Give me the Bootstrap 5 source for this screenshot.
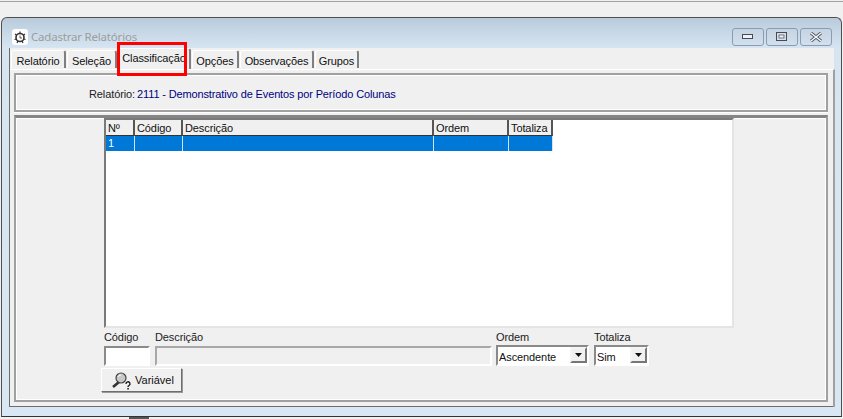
<!DOCTYPE html>
<html lang="pt"><head><meta charset="utf-8"><title>Cadastrar Relatórios</title>
<link href="https://cdn.jsdelivr.net/npm/bootstrap@5.3.0/dist/css/bootstrap.min.css" rel="stylesheet">
<style>
html,body{height:419px;overflow:hidden}
body{background:#f0f0f0;font:11px/14px "Liberation Sans",sans-serif;letter-spacing:-.1px;color:#111;position:relative;width:843px}
.deskline{height:2px;border-bottom:1px solid #a2a2a2;margin-bottom:15px;margin-top:0}
.win{width:841px;height:400px;margin-left:1px;border:1px solid #4f4f4f;border-bottom-color:#333;border-radius:6px 6px 0 0;background:linear-gradient(#b9cbdb 0,#d7e5f2 30px,#d9e7f4 100%);padding:0 7px 8px 7px}
.titlebar{height:30px;padding:8px 2px 0 1px}
.appicon{width:16px;height:16px;background:#fff;border-radius:3px;margin:0 3px 0 2px}
.wintitle{color:#9c9c9c;font-size:11.5px;font-family:"Noto Sans",sans-serif;letter-spacing:-.2px}
.capbtns{gap:2px;margin-right:0}
.capbtn{width:32px;height:18px;border:1px solid #8a9cb4;border-radius:3px;background:linear-gradient(#c6d4e2,#d2e0ee);display:flex;align-items:center;justify-content:center;padding:0}
.client{background:#f0f0f0;height:359px;border-bottom:1px solid #6d6d6d;border-left:1px solid #6d6d6d;width:825px}
.tabstrip{height:21px;padding:2px 0 0 1px;flex-wrap:nowrap;position:relative}
.tabstrip .nav-link{padding:3px 0 0;height:18px;text-align:center;color:#111;background:#f0f0f0;border:0;border-top:1px solid #fff;border-left:1px solid #fff;border-right:2px solid #808080;border-radius:3px 3px 0 0;margin-right:1px;line-height:14px;font-size:11px}
.tabstrip .nav-link.active{height:21px;margin-top:-2px;padding-top:2px;position:relative;z-index:1;color:#111;background:#f0f0f0}
.tabpage{height:338px;border-top:1px solid #fff;border-right:2px solid #a0a0a0;margin-right:-1px;padding:3px 4px 0 4px}
.relpanel{height:39px;width:814px;margin-bottom:3px;padding-left:73px;padding-top:12px;border:2px solid #a0a0a0;box-shadow:inset 1px 1px 0 #fff,inset -1px -1px 0 #fff,0 1px 0 #fff}
.rellabel{color:#222}
.relvalue{color:#000080;margin-left:2px;letter-spacing:-.14px}
.mainpanel{height:287px;width:814px;border:2px solid #a0a0a0;border-top:3px solid #858585;box-shadow:inset 1px 1px 0 #fff,inset -1px -1px 0 #fff;padding:0 0 0 88px}
.gridbox{width:630px;height:210px;background:#fff;border:2px solid;border-color:#7a7a7a #e4e4e4 #e4e4e4 #7a7a7a;overflow:hidden}
.gridbox .table{width:447px;margin:0;table-layout:fixed;--bs-table-bg:transparent;border-collapse:separate;border-spacing:0;font-size:11px}
.gridbox .table th{font-weight:400;height:15px;padding:2px 0 0 2px;line-height:13px;background:#f0f0f0;border:0;border-right:2px solid #555;border-bottom:1px solid #333;color:#111}
.gridbox .table td{height:15px;padding:1px 0 0 2px;line-height:13px;background:#0078d7;color:#fff;border:0;border-right:1px solid #cfe4f7}
.fields{margin-left:0;margin-top:1px;width:552px;height:37px}
.fieldcol{display:flex;flex-direction:column}
.fieldlbl{height:17px;padding-top:1px;color:#222}
.boxin{height:21px;border:2px solid;border-color:#8a8a8a #fff #fff #8a8a8a;background:#fff;border-radius:0;padding:0 0 0 1px;font-size:11px;line-height:20px;box-shadow:none;color:#111}
.form-control.boxoff,.form-control.boxoff:disabled{background:#f0f0f0;border-color:#a8a8a8 #fff #fff #a8a8a8}
.dropbtn{width:17px;height:16px;background:#f0f0f0;border:2px solid;border-color:#f4f4f4 #777 #777 #f4f4f4;display:flex;align-items:center;justify-content:center;padding:0;border-radius:0}
.varbtn{width:81px;height:24px;margin-left:-3px;margin-top:2px;background:#f0f0f0;border:1px solid;border-color:#fff #6e6e6e #6e6e6e #fff;border-radius:0;font-size:11px;line-height:14px;color:#111;padding:0 0 0 9px;box-shadow:1px 1px 0 #999;gap:2px}
.redmark{position:absolute;left:117px;top:42px;width:70px;height:34px;border:3px solid #f00;pointer-events:none;z-index:5}
.deskbit{position:absolute;top:417px;height:2px;background:#555}
</style></head><body>
<div class="deskline"></div>
<div class="win">
  <div class="titlebar d-flex align-items-center">
    <span class="appicon d-flex align-items-center justify-content-center">
      <svg width="14" height="14" viewBox="0 0 14 14"><circle cx="7" cy="7.500" r="4" fill="none" stroke="#333" stroke-width="1.600"/><path d="M7 1.500v2M2 4l1.500 1M12 4l-1.500 1M1.500 9.500l2-.5M12.500 9.500l-2-.5M4 13l1-2M10 13l-1-2" stroke="#333" stroke-width="1.200"/><path d="M7 5.500v2.500h2" fill="none" stroke="#555"/></svg>
    </span>
    <span class="wintitle">Cadastrar Relatórios</span>
    <div class="capbtns d-flex ms-auto">
      <button class="capbtn" aria-label="Minimizar"><svg width="12" height="6"><rect x=".5" y=".5" width="10" height="4" fill="#eef1f5" stroke="#444b57"/></svg></button>
      <button class="capbtn" aria-label="Maximizar"><svg width="12" height="10"><rect x=".5" y=".5" width="10" height="8" fill="#d5deea" stroke="#444b57"/><rect x="3" y="3" width="5" height="3" fill="#eef1f5" stroke="#444b57" stroke-width=".7"/></svg></button>
      <button class="capbtn" aria-label="Fechar"><svg width="14" height="10"><path d="M2 1l10 8M12 1L2 9" stroke="#4d5563" stroke-width="3.200"/><path d="M2 1l10 8M12 1L2 9" stroke="#f2f4f7" stroke-width="1.600"/></svg></button>
    </div>
  </div>
  <div class="client">
    <ul class="nav tabstrip">
      <li class="nav-item"><a class="nav-link" style="width:55px">Relatório</a></li>
      <li class="nav-item"><a class="nav-link" style="width:50px">Seleção</a></li>
      <li class="nav-item"><a class="nav-link active" style="width:73px">Classificação</a></li>
      <li class="nav-item"><a class="nav-link" style="width:47px">Opções</a></li>
      <li class="nav-item"><a class="nav-link" style="width:74px">Observações</a></li>
      <li class="nav-item"><a class="nav-link" style="width:44px">Grupos</a></li>
    </ul>
    <div class="tabpage">
      <div class="relpanel"><span class="rellabel">Relatório:</span><span class="relvalue">2111 - Demonstrativo de Eventos por Período Colunas</span></div>
      <div class="mainpanel">
        <div class="gridbox">
          <table class="table">
            <colgroup><col style="width:29px"><col style="width:48px"><col style="width:251px"><col style="width:75px"><col style="width:44px"></colgroup>
            <thead><tr><th>Nº</th><th>Código</th><th>Descrição</th><th>Ordem</th><th>Totaliza</th></tr></thead>
            <tbody><tr><td>1</td><td></td><td></td><td></td><td></td></tr></tbody>
          </table>
        </div>
        <div class="fields d-flex">
          <div class="fieldcol" style="width:46px;margin-right:5px"><span class="fieldlbl">Código</span><input class="form-control boxin" aria-label="Código"></div>
          <div class="fieldcol" style="width:337px;margin-right:4px"><span class="fieldlbl">Descrição</span><input class="form-control boxin boxoff" disabled aria-label="Descrição"></div>
          <div class="fieldcol" style="width:93px;margin-right:5px"><span class="fieldlbl">Ordem</span><div class="boxin d-flex justify-content-between align-items-start"><span>Ascendente</span><span class="dropbtn"><svg width="7" height="4"><path d="M0 0h7L3.500 4z" fill="#111"/></svg></span></div></div>
          <div class="fieldcol" style="width:55px"><span class="fieldlbl">Totaliza</span><div class="boxin d-flex justify-content-between align-items-start"><span>Sim</span><span class="dropbtn"><svg width="7" height="4"><path d="M0 0h7L3.500 4z" fill="#111"/></svg></span></div></div>
        </div>
        <button class="btn varbtn d-flex align-items-center">
          <svg width="22" height="19" viewBox="0 0 22 19"><path d="M2 16l6-5" stroke="#333" stroke-width="2.600"/><circle cx="10" cy="7" r="5" fill="#c8c8c8" stroke="#444" stroke-width="1.200"/><path d="M7 6a3 3 0 0 1 3-2" stroke="#fff" fill="none"/><path d="M15 13a2 2 0 1 1 3 1.500c-1 .5-1 1-1 1.500" fill="none" stroke="#111" stroke-width="1.300"/><rect x="16.300" y="17" width="1.500" height="1.500" fill="#111"/></svg>
          <span>Variável</span>
        </button>
      </div>
    </div>
  </div>
</div>
<div class="redmark"></div>
<div class="deskbit" style="left:129px;width:20px"></div>
</body></html>
